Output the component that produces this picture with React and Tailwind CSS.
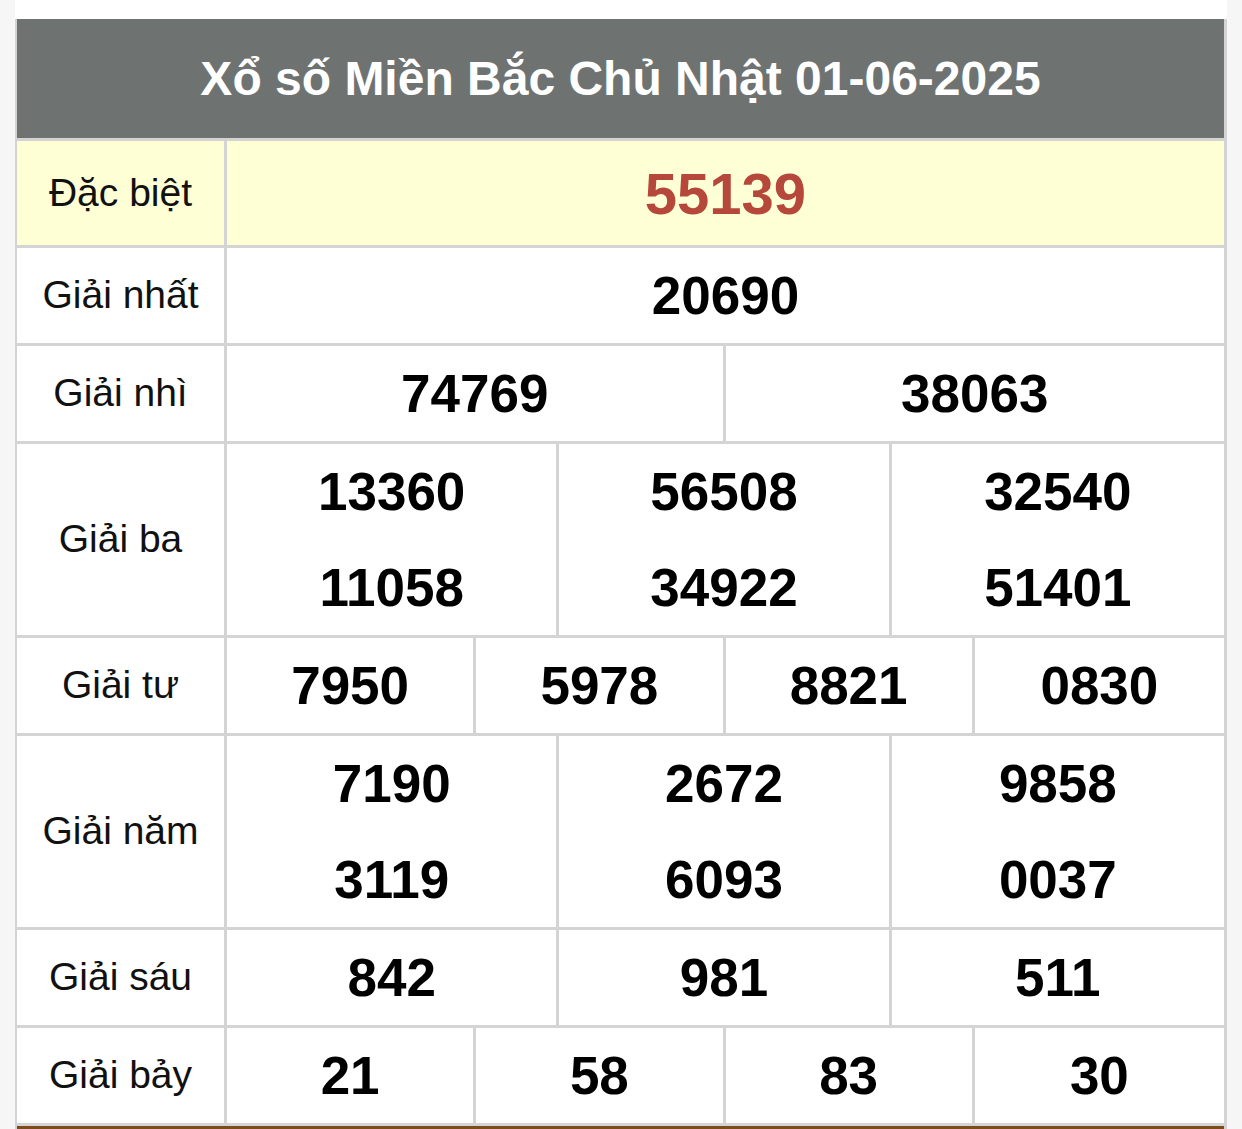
import React from "react";

const rows = [
  { label: "Giải nhất", cols: 1, nums: ["20690"] },
  { label: "Giải nhì", cols: 2, nums: ["74769", "38063"] },
  { label: "Giải ba", cols: 3, nums: [["13360", "11058"], ["56508", "34922"], ["32540", "51401"]] },
  { label: "Giải tư", cols: 4, nums: ["7950", "5978", "8821", "0830"] },
  { label: "Giải năm", cols: 3, nums: [["7190", "3119"], ["2672", "6093"], ["9858", "0037"]] },
  { label: "Giải sáu", cols: 3, nums: ["842", "981", "511"] },
  { label: "Giải bảy", cols: 4, nums: ["21", "58", "83", "30"] },
];

const gridCols = {
  1: "grid-cols-1",
  2: "grid-cols-2",
  3: "grid-cols-3",
  4: "grid-cols-4",
};

function Cell({ value }) {
  if (Array.isArray(value)) {
    return (
      <div className="flex flex-col">
        {value.map((v) => (
          <div key={v} className="h-[95.5px] flex items-center justify-center">
            {v}
          </div>
        ))}
      </div>
    );
  }
  return <div className="flex items-center justify-center">{value}</div>;
}

export default function App() {
  return (
    <div className="min-h-screen bg-[#f6f6f6]" style={{ fontFamily: '"Liberation Sans", Arial, sans-serif' }}>
      <div className="ml-[15px] w-[1212px] bg-white pt-[19px]">
        <div className="border-l-2 border-r-[3px] border-[#d3d3d3]">
          {/* title */}
          <div className="h-[122px] bg-[#6e7372] border-b-[3px] border-[#d3d3d3] flex items-center justify-center text-white font-bold text-[48px]">
            Xổ số Miền Bắc Chủ Nhật 01-06-2025
          </div>

          {/* special prize */}
          <div className="flex h-[107px] bg-[#ffffd6] border-b-[3px] border-[#d4d4d4]">
            <div className="w-[210px] border-r-[3px] border-[#d4d4d4] flex items-center justify-center text-[39px] text-[#111]">
              Đặc biệt
            </div>
            <div className="flex-1 flex items-center justify-center text-[58px] font-bold text-[#b6483b]">
              55139
            </div>
          </div>

          {rows.map((row) => (
            <div key={row.label} className="flex border-b-[3px] border-[#d4d4d4]">
              <div className="w-[210px] border-r-[3px] border-[#d4d4d4] flex items-center justify-center text-[39px] text-[#111]">
                {row.label}
              </div>
              <div className={`flex-1 grid ${gridCols[row.cols]} divide-x-[3px] divide-[#d4d4d4] min-h-[95px] text-[53px] font-bold text-black`}>
                {row.nums.map((n, i) => (
                  <Cell key={i} value={n} />
                ))}
              </div>
            </div>
          ))}
          <div className="h-[4px] bg-[#7d4a1c]"></div>
        </div>
      </div>
    </div>
  );
}
